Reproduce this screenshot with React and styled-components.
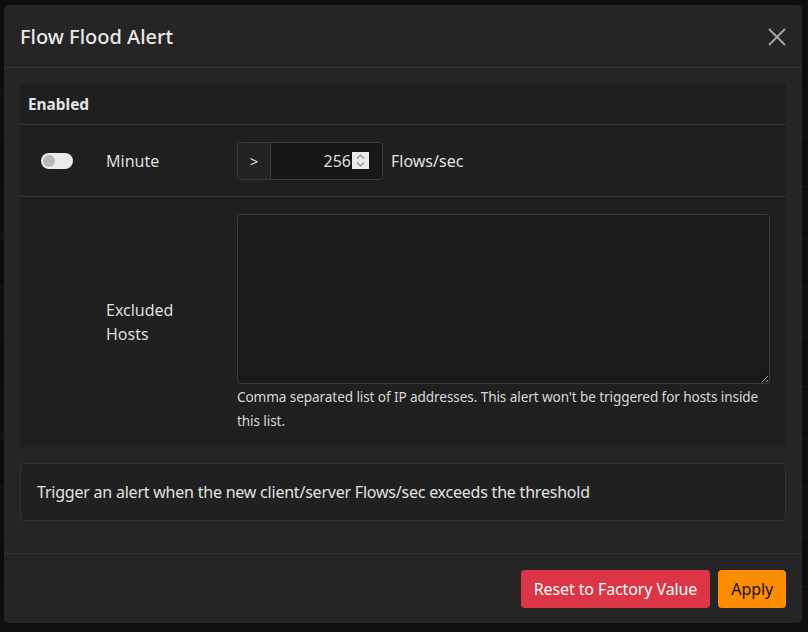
import React from "react";
import styled, { createGlobalStyle } from "styled-components";

const Global = createGlobalStyle`
  html, body { margin: 0; padding: 0; background: #0c0c0c; }
  body { font-family: "Noto Sans", "Open Sans", sans-serif; color: #e6e6e6; }
  * { box-sizing: border-box; }
`;

const Page = styled.div`
  width: 808px;
  height: 632px;
  overflow: hidden;
  position: relative;
  background: #0d0d0d;
`;

const BackRows = styled.div`
  display: flex;
  flex-direction: column;
  padding-top: 40px;
`;

const BackRow = styled.div`
  height: ${(p) => p.h || 50}px;
  border-bottom: 1px solid #161616;
  background: ${(p) => (p.odd ? "#0f0f0f" : "#0c0c0c")};
`;

const Overlay = styled.div`
  position: absolute;
  inset: 0;
  display: flex;
  align-items: flex-start;
  justify-content: flex-start;
  padding: 5px 0 0 4px;
`;

const Modal = styled.div`
  width: 798px;
  height: 618px;
  background: #252525;
  border-radius: 5px;
  display: flex;
  flex-direction: column;
`;

const Header = styled.div`
  height: 63px;
  display: flex;
  align-items: center;
  justify-content: space-between;
  padding: 0 16px 0 16px;
  border-bottom: 1px solid #333;
`;

const Title = styled.h5`
  margin: 0;
  font-size: 20px;
  font-weight: 500;
  color: #e8e8e8;
  letter-spacing: 0;
`;

const Close = styled.button`
  background: none;
  border: 0;
  padding: 0;
  width: 18px;
  height: 18px;
  display: flex;
  cursor: pointer;
  margin-top: 1px;
`;

const Body = styled.div`
  padding: 16px;
  flex: 1;
  display: flex;
  flex-direction: column;
  gap: 16px;
`;

const Table = styled.div`
  background: #1f1f1f;
  display: grid;
  grid-template-columns: 78px 131px 1fr;
`;

const HeadCell = styled.div`
  grid-column: 1 / -1;
  height: 41px;
  display: flex;
  align-items: center;
  padding: 0 8px;
  font-weight: 700;
  font-size: 15.4px;
  border-bottom: 1px solid #333;
  color: #e6e6e6;
`;

const Cell = styled.div`
  display: flex;
  align-items: center;
  justify-content: ${(p) => (p.center ? "center" : "flex-start")};
  padding: ${(p) => p.pad || "0 8px"};
  border-bottom: ${(p) => (p.last ? "0" : "1px solid #333")};
  min-height: ${(p) => p.h || 72}px;
  font-size: 16px;
  line-height: 24px;
  color: #dedede;
`;

const LabelText = styled.span`
  display: block;
  width: 80px;
`;

const Toggle = styled.span`
  width: 32px;
  height: 16px;
  border-radius: 8px;
  background: #ebebeb;
  position: relative;
  display: inline-block;
  margin-right: 4px;
  &::after {
    content: "";
    position: absolute;
    left: 2px;
    top: 2px;
    width: 12px;
    height: 12px;
    border-radius: 50%;
    background: #b9b9b9;
  }
`;

const Group = styled.div`
  display: flex;
  align-items: stretch;
  height: 38px;
  border: 1px solid #3b3b3b;
  border-radius: 4px;
  overflow: hidden;
`;

const Addon = styled.div`
  width: 33px;
  background: #222;
  border-right: 1px solid #3b3b3b;
  display: flex;
  align-items: center;
  justify-content: center;
  font-size: 15px;
  color: #e0e0e0;
`;

const NumBox = styled.div`
  width: 111px;
  background: #171717;
  display: flex;
  align-items: center;
  justify-content: flex-end;
  padding-right: 13px;
  font-size: 16px;
  color: #dcdcdc;
`;

const Spin = styled.span`
  width: 17px;
  height: 17px;
  background: #ebe9ee;
  display: flex;
  align-items: center;
  justify-content: center;
  margin-left: 1px;
`;

const Unit = styled.span`
  margin-left: 8px;
  font-size: 16px;
  color: #e0e0e0;
`;

const FieldCol = styled.div`
  display: flex;
  flex-direction: column;
  width: 100%;
`;

const TextArea = styled.textarea`
  width: 100%;
  height: 170px;
  background: #1a1a1a;
  border: 1px solid #3b3b3b;
  border-radius: 4px;
  resize: vertical;
  color: #ddd;
  font: inherit;
  display: block;
  outline: none;
`;

const Help = styled.div`
  font-size: 13.6px;
  line-height: 24px;
  margin-top: 1px;
  color: #d8d8d8;
  letter-spacing: -0.1px;
`;

const Desc = styled.div`
  border: 1px solid #333;
  border-radius: 4px;
  background: #202020;
  padding: 16px;
  font-size: 16px;
  line-height: 24px;
  color: #e2e2e2;
  letter-spacing: -0.22px;
`;

const Footer = styled.div`
  border-top: 1px solid #333;
  height: 70px;
  display: flex;
  align-items: center;
  justify-content: flex-end;
  gap: 8px;
  padding: 0 16px;
`;

const Btn = styled.button`
  height: 38px;
  padding: 0 ${(p) => p.px || 13}px;
  border: 0;
  border-radius: 4px;
  font-family: inherit;
  font-size: 16px;
  letter-spacing: -0.1px;
  background: ${(p) => p.bg};
  color: ${(p) => p.fg};
  cursor: pointer;
`;

export default function App() {
  const rows = [50, 50, 47, 53, 47, 53, 47, 53, 47, 53, 47, 53, 50];
  return (
    <Page>
      <Global />
      <BackRows>
        {rows.map((h, i) => (
          <BackRow key={i} h={h} odd={i % 2} />
        ))}
      </BackRows>
      <Overlay>
        <Modal>
          <Header>
            <Title>Flow Flood Alert</Title>
            <Close aria-label="Close">
              <svg width="18" height="18" viewBox="0 0 18 18">
                <path d="M1 1L17 17M17 1L1 17" stroke="#a8a8a8" strokeWidth="1.8" fill="none" />
              </svg>
            </Close>
          </Header>
          <Body>
            <Table>
              <HeadCell>Enabled</HeadCell>
              <Cell center>
                <Toggle />
              </Cell>
              <Cell>Minute</Cell>
              <Cell>
                <Group>
                  <Addon>&gt;</Addon>
                  <NumBox>
                    256
                    <Spin>
                      <svg width="11" height="15" viewBox="0 0 11 15">
                        <path d="M2 5.5L5.5 2L9 5.5M2 9.5L5.5 13L9 9.5" stroke="#8a8a8a" strokeWidth="1.2" fill="none" />
                      </svg>
                    </Spin>
                  </NumBox>
                </Group>
                <Unit>Flows/sec</Unit>
              </Cell>
              <Cell last h={250} />
              <Cell last h={250}>
                <LabelText>Excluded Hosts</LabelText>
              </Cell>
              <Cell last h={250} pad="16px 16px 14px 8px">
                <FieldCol>
                  <TextArea />
                  <Help>
                    Comma separated list of IP addresses. This alert won't be triggered for hosts inside this list.
                  </Help>
                </FieldCol>
              </Cell>
            </Table>
            <Desc>Trigger an alert when the new client/server Flows/sec exceeds the threshold</Desc>
          </Body>
          <Footer>
            <Btn bg="#dc3545" fg="#fff" px={13}>Reset to Factory Value</Btn>
            <Btn bg="#fd8c00" fg="#111">Apply</Btn>
          </Footer>
        </Modal>
      </Overlay>
    </Page>
  );
}
